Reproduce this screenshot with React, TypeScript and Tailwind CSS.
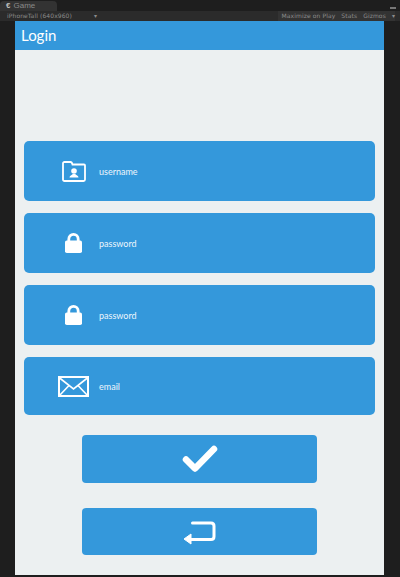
import React from "react";

const UserFolderIcon = () => (
  <svg width="24" height="21" viewBox="0 0 24 21" fill="none">
    <path d="M1 4V2.5C1 1.6 1.6 1 2.5 1H8.5C9.5 1 10 1.6 10.5 3.5H22C22.6 3.5 23 3.9 23 4.5V18.5C23 19.4 22.4 20 21.5 20H2.5C1.6 20 1 19.4 1 18.5V4Z" stroke="white" strokeWidth="1.8" />
    <circle cx="12" cy="10" r="2.8" fill="white" />
    <path d="M7.5 16.5C7.5 14.5 10 14 10.8 13H13.2C14 14 16.5 14.5 16.5 16.5H7.5Z" fill="white" />
  </svg>
);

const LockIcon = () => (
  <svg width="17" height="20" viewBox="0 0 17 20" fill="none">
    <path d="M3.8 9V6.2C3.8 3.2 5.8 1.4 8.5 1.4C11.2 1.4 13.2 3.2 13.2 6.2V9" stroke="white" strokeWidth="2.8" />
    <rect x="0" y="7.5" width="17" height="12.5" rx="1.8" fill="white" />
  </svg>
);

const MailIcon = () => (
  <svg width="31" height="21" viewBox="0 0 31 21" fill="none">
    <rect x="1" y="1" width="29" height="19" stroke="white" strokeWidth="2" />
    <path d="M1 1.5L15.5 13L30 1.5M1 20L11 9.5M30 20L20 9.5" stroke="white" strokeWidth="1.6" />
  </svg>
);

const CheckIcon = () => (
  <svg width="36" height="28" viewBox="0 0 36 28" fill="none">
    <path d="M4 14.5L13 23.5L32 4" stroke="white" strokeWidth="6.5" strokeLinecap="round" strokeLinejoin="round" />
  </svg>
);

const ReturnIcon = () => (
  <svg width="33" height="24" viewBox="0 0 33 24" fill="none">
    <path d="M9.5 2H28C30 2 31 3 31 5V15.5C31 17.5 30 18.5 28 18.5H7" stroke="white" strokeWidth="3" strokeLinecap="round" />
    <path d="M8 13V23L1 18L8 13Z" fill="white" stroke="white" strokeWidth="1" strokeLinejoin="round" />
  </svg>
);

const Field = ({ icon, label, h }: { icon: React.ReactNode; label: string; h: string }) => (
  <div className={`flex items-center rounded-[5px] bg-[#3498db] ${h}`}>
    <div className="flex w-[75px] justify-end">
      <div className="flex w-[51px] justify-center">{icon}</div>
    </div>
    <span className="text-[9px] leading-none text-[#eef6fc]">{label}</span>
  </div>
);

export default function App() {
  return (
    <div className="flex h-[577px] w-[400px] flex-col overflow-hidden bg-[#1e1e1e] font-['Lato',sans-serif]">
      {/* editor tab strip */}
      <div className="relative flex h-[11px] items-end">
        <div className="flex h-[10px] w-[57px] items-center gap-[3px] rounded-t-sm bg-[#333333] pl-[6px] text-[8px] leading-none text-[#8a8a8a] font-['Liberation_Sans',sans-serif]">
          <span className="font-bold text-[#bbbbbb]">€</span>
          <span>Game</span>
        </div>
        <div className="absolute right-[4px] top-[7px] h-[2px] w-[6px] bg-[#777777]" />
      </div>
      {/* game view toolbar */}
      <div className="flex h-[10px] items-center justify-between bg-[#2b2b2b] pl-[7px] pr-[5px] text-[6px] leading-none tracking-[0.1px] text-[#8c8c8c] font-['DejaVu_Sans',sans-serif]">
        <div className="flex items-center gap-[22px]">
          <span>iPhoneTall (640x960)</span>
          <span>▾</span>
        </div>
        <div className="flex h-full items-center gap-[6px] bg-[#333333] pl-[4px]">
          <span>Maximize on Play</span>
          <span>Stats</span>
          <span>Gizmos</span>
          <span>▾</span>
        </div>
      </div>
      {/* game canvas */}
      <div className="mx-[15px] flex h-[554px] w-[369px] flex-col bg-[#ecf0f1]">
        <div className="flex h-[29px] items-center bg-[#3498db] pl-[6px] text-[15px] text-white">
          Login
        </div>
        <div className="flex flex-col gap-[12px] px-[9px] pt-[91px]">
          <Field icon={<UserFolderIcon />} label="username" h="h-[60px]" />
          <Field icon={<LockIcon />} label="password" h="h-[60px]" />
          <Field icon={<LockIcon />} label="password" h="h-[60px]" />
          <Field icon={<MailIcon />} label="email" h="h-[58px]" />
        </div>
        <div className="ml-[67px] mt-[20px] flex h-[48px] w-[235px] items-center justify-center rounded-[4px] bg-[#3498db]">
          <CheckIcon />
        </div>
        <div className="ml-[67px] mt-[25px] flex h-[47px] w-[235px] items-center justify-center rounded-[4px] bg-[#3498db] pt-[3px]">
          <ReturnIcon />
        </div>
      </div>
    </div>
  );
}
